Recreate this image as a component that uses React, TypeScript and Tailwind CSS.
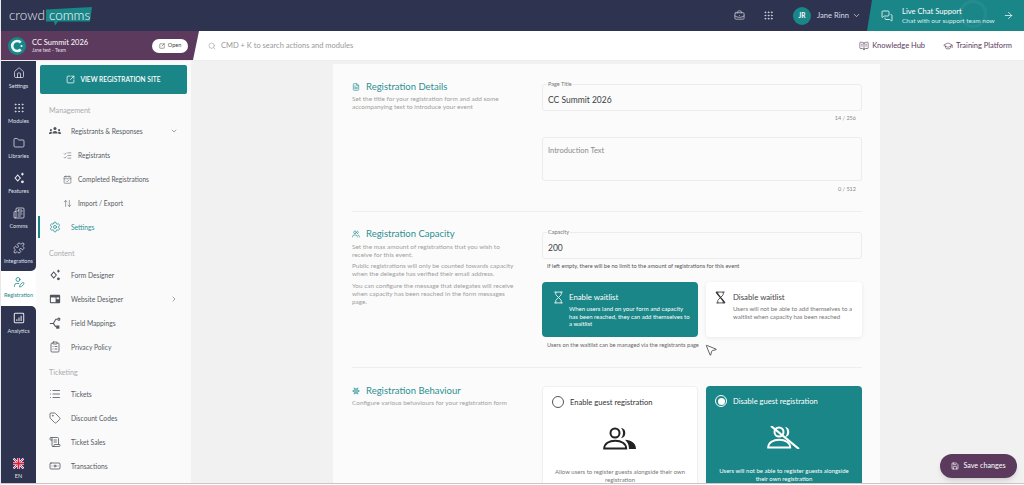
import type { ComponentType, ReactNode } from "react";
import {
  ArrowRight,
  ArrowUpDown,
  Banknote,
  BookOpenText,
  BriefcaseBusiness,
  CalendarCheck,
  ChevronDown,
  ChevronRight,
  ClipboardList,
  FileText,
  Folder,
  GraduationCap,
  Grip,
  Hourglass,
  House,
  List,
  ListChecks,
  MessagesSquare,
  MousePointer2,
  Newspaper,
  Puzzle,
  Save,
  ScrollText,
  Search,
  Settings,
  Snowflake,
  SquareArrowOutUpRight,
  Tag,
  UserPen,
  Users,
} from "lucide-react";

type IconType = ComponentType<{ size?: number; strokeWidth?: number; className?: string }>;

function SparkIcon({ size = 12, className }: { size?: number; strokeWidth?: number; className?: string }) {
  return (
    <svg width={size} height={size} viewBox="0 0 14 14" fill="none" stroke="currentColor" strokeWidth="1.3" className={className}>
      <path d="M5.5 3.5l3 3.5-3 3.5-3-3.5z" />
      <path d="M11 1v3M9.500 2.500h3" />
      <circle cx="11" cy="11.500" r="1" fill="currentColor" />
    </svg>
  );
}

function TeamIcon({ size = 12, className }: { size?: number; strokeWidth?: number; className?: string }) {
  return (
    <svg width={size} height={size} viewBox="0 0 14 14" fill="currentColor" className={className}>
      <circle cx="7" cy="4" r="1.800" />
      <path d="M4 10c0-2 1.200-3 3-3s3 1 3 3z" />
      <circle cx="2.200" cy="6" r="1.200" />
      <path d="M0 10.500c0-1.500.8-2.500 2.200-2.500.6 0 1 .1 1.300.4-.4.5-.6 1.200-.6 2.100z" />
      <circle cx="11.800" cy="6" r="1.200" />
      <path d="M14 10.500c0-1.500-.8-2.500-2.200-2.500-.6 0-1 .1-1.300.4.400.5.600 1.200.600 2.100z" />
    </svg>
  );
}

function WindowIcon({ size = 12, className }: { size?: number; strokeWidth?: number; className?: string }) {
  return (
    <svg width={size} height={size} viewBox="0 0 14 14" className={className}>
      <rect x="1" y="2" width="12" height="10" rx="1.200" fill="currentColor" />
      <rect x="2.200" y="5.200" width="5.500" height="5.500" fill="#fafafa" />
      <rect x="8.800" y="5.200" width="3" height="2" fill="#fafafa" />
    </svg>
  );
}

function MappingIcon({ size = 12, className }: { size?: number; strokeWidth?: number; className?: string }) {
  return (
    <svg width={size} height={size} viewBox="0 0 14 14" fill="none" stroke="currentColor" strokeWidth="1.200" className={className}>
      <path d="M1 7.500h4l3-5h2M5 7.500l3 4" />
      <circle cx="11.500" cy="2.500" r="1.200" />
      <rect x="9" y="10.500" width="2.500" height="2.500" fill="currentColor" />
    </svg>
  );
}

function ChartBoxIcon({ size = 12, className }: { size?: number; strokeWidth?: number; className?: string }) {
  return (
    <svg width={size} height={size} viewBox="0 0 14 14" fill="none" stroke="currentColor" strokeWidth="1.200" className={className}>
      <rect x="1.500" y="1.500" width="11" height="11" rx="1" />
      <path d="M4.500 10.500v-2M7 10.500v-4M9.500 10.500v-6" />
    </svg>
  );
}

const railTop: { label: string; icon: IconType }[] = [
  { label: "Settings", icon: House },
  { label: "Modules", icon: Grip },
  { label: "Libraries", icon: Folder },
  { label: "Features", icon: SparkIcon },
  { label: "Comms", icon: Newspaper },
  { label: "Integrations", icon: Puzzle },
];

function RailItem({ label, icon: Icon }: { label: string; icon: IconType }) {
  return (
    <div className="h-[35px] flex flex-col items-center pt-[6px] text-white">
      <Icon size={12} strokeWidth={1.5} className="text-[#e6e7ee]" />
      <span className="text-[5.5px] leading-[8px] mt-[3px] text-[#dfe1ea]">{label}</span>
    </div>
  );
}

function NavRow({ label, icon: Icon, right }: { label: string; icon: IconType; right?: ReactNode }) {
  return (
    <div className="h-[24px] flex items-center pl-[13px] pr-[13px] text-[#555a63]">
      <Icon size={12} strokeWidth={1.6} className="text-[#50545c] shrink-0" />
      <span className="ml-[10px] text-[6.7px] flex-1">{label}</span>
      {right}
    </div>
  );
}

function SubRow({ label, icon: Icon }: { label: string; icon: IconType }) {
  return (
    <div className="h-[24px] flex items-center pl-[27px] pt-[1px] text-[#555a63]">
      <Icon size={9} strokeWidth={1.6} className="text-[#60646c] shrink-0" />
      <span className="ml-[6px] text-[6.6px]">{label}</span>
    </div>
  );
}

function Group({ children }: { children: ReactNode }) {
  return <div className="h-[12px] flex items-center pl-[13px] text-[7.200px] text-[#a9abb0]">{children}</div>;
}

function SectionTitle({ icon: Icon, children }: { icon: IconType; children: ReactNode }) {
  return (
    <div className="flex items-center gap-[6px] text-[#2b9092] text-[9.500px] leading-[12px]">
      <Icon size={8} strokeWidth={2} />
      <span>{children}</span>
    </div>
  );
}

function Field({ label, value }: { label: string; value: string }) {
  return (
    <div className="relative h-[27px] border border-[#ececec] rounded-[3px] flex items-center px-[5px] pt-[5px] text-[8.500px] text-[#3c3f45]">
      <span className="absolute -top-[4px] left-[4px] bg-[#fbfbfb] px-[1px] text-[5.500px] leading-[7px] text-[#777]">{label}</span>
      {value}
    </div>
  );
}

function GuestIcon({ off }: { off?: boolean }) {
  return (
    <svg width="34" height="23" viewBox="0 0 34 23" fill="none" stroke="currentColor">
      <circle cx="12" cy="6" r="4.500" strokeWidth="2" />
      <path d="M18 .8a5.300 5.300 0 0 1 0 10.400a7.500 7.500 0 0 0 0-10.400z" fill="currentColor" stroke="none" />
      <path d="M1.200 21.500c0-5 5-7.800 11-7.800s11 2.800 11 7.800z" strokeWidth="2" />
      {off ? (
        <path d="M4 0l28 23" strokeWidth="2.200" />
      ) : (
        <path d="M22 12.800c6 .4 11 3.300 11 9.200h-7c0-3.800-1.300-6.700-4-9.200z" fill="currentColor" stroke="none" />
      )}
    </svg>
  );
}

function FlagUk() {
  return (
    <svg width="11" height="11" viewBox="0 0 22 22">
      <rect width="22" height="22" fill="#27357a" />
      <path d="M0 0l22 22M22 0L0 22" stroke="#fff" strokeWidth="4" />
      <path d="M0 0l22 22M22 0L0 22" stroke="#d8213b" strokeWidth="1.600" />
      <path d="M11 0v22M0 11h22" stroke="#fff" strokeWidth="6" />
      <path d="M11 0v22M0 11h22" stroke="#d8213b" strokeWidth="3.600" />
    </svg>
  );
}

function EventLogo() {
  return (
    <svg width="18" height="18" viewBox="0 0 18 18" fill="none" className="shrink-0">
      <circle cx="9" cy="9" r="9" fill="#1a8688" />
      <path d="M12.800 5.500a5 5 0 1 0 0 7" stroke="#e9f7f7" strokeWidth="2.600" />
      <circle cx="13.500" cy="9" r="1.100" fill="#e9f7f7" />
    </svg>
  );
}

export default function App() {
  return (
    <div className="relative w-[1024px] h-[485px] overflow-hidden flex flex-col bg-white font-['Lato','Noto_Sans',sans-serif] border-l border-[#e8e8ea]">
      {/* top bar */}
      <header className="h-[31px] shrink-0 bg-[#2e3350] flex items-center text-white">
        <div className="ml-[8px] flex items-center text-[13.500px] font-light leading-none">
          <span className="text-[#e8e9ef]">crowd</span>
          <span className="relative ml-[1px] w-[46px] h-[14px] pl-[3px] flex items-center">
            <svg className="absolute left-0 -top-[2px]" width="46" height="21" viewBox="0 0 46 21">
              <path d="M0 2.500L46 0l-2 14.500H12l-3 4-1-4H0z" fill="#1a8688" />
            </svg>
            <span className="relative text-white">comms</span>
          </span>
        </div>
        <div className="ml-auto flex items-center h-full">
          <BriefcaseBusiness size={11} strokeWidth={1.5} className="text-[#d8dae4]" />
          <Grip size={11} strokeWidth={1.8} className="ml-[18px] text-[#d8dae4]" />
          <div className="ml-[19px] w-[18px] h-[18px] rounded-full bg-[#1a8688] flex items-center justify-center text-[6.500px] font-bold">JR</div>
          <span className="ml-[6px] text-[7.600px] text-[#d8dae4]">Jane Rinn</span>
          <ChevronDown size={9} className="ml-[3px] text-[#d8dae4]" />
          <div className="relative ml-[6px] w-[157px] h-full overflow-hidden bg-[#1a8688] [clip-path:polygon(5px_0,100%_0,100%_100%,0_100%)] flex items-center pl-[14px]">
            <span className="absolute left-[92px] top-0 w-[28px] h-[28px] rounded-full border-[3px] border-white/5" />
            <MessagesSquare size={12} strokeWidth={1.6} className="relative" />
            <div className="relative ml-[9px] flex flex-col">
              <span className="text-[7.600px] leading-[10px]">Live Chat Support</span>
              <span className="text-[6.500px] leading-[9px] text-[#d8eeee]">Chat with our support team now</span>
            </div>
            <ArrowRight size={11} strokeWidth={1.6} className="relative ml-[8px]" />
          </div>
        </div>
      </header>

      {/* event bar */}
      <div className="h-[30px] shrink-0 flex items-center bg-white border-b border-[#eeeeee]">
        <div className="w-[198px] h-full bg-[#5b3a5e] [clip-path:polygon(0_0,100%_0,192px_100%,0_100%)] flex items-center pl-[7px] text-white">
          <EventLogo />
          <div className="ml-[6px] flex flex-col">
            <span className="text-[7.500px] leading-[9px]">CC Summit 2026</span>
            <span className="text-[4.800px] leading-[7px] text-[#e7dfe8]">Jane test - Team</span>
          </div>
          <div className="ml-auto mr-[11px] w-[36px] h-[14px] rounded-full bg-white text-[#444] flex items-center justify-center gap-[3px] text-[5.500px]">
            <SquareArrowOutUpRight size={6} />
            Open
          </div>
        </div>
        <Search size={8} className="ml-[9px] text-[#a8a8a8]" />
        <span className="ml-[5px] text-[7.500px] text-[#999]">CMD + K to search actions and modules</span>
        <div className="ml-auto flex items-center pr-[12px] text-[7.500px] text-[#5b3a5e]">
          <BookOpenText size={10} strokeWidth={1.5} />
          <span className="ml-[3px]">Knowledge Hub</span>
          <GraduationCap size={10} strokeWidth={1.5} className="ml-[18px]" />
          <span className="ml-[3px]">Training Platform</span>
        </div>
      </div>

      {/* body */}
      <div className="flex-1 min-h-0 flex overflow-hidden bg-[#f1f1f1]">
        {/* icon rail */}
        <nav className="w-[35px] shrink-0 flex flex-col bg-white">
          <div className="h-[210px] bg-[#2e3350] rounded-br-[5px] overflow-hidden">
            {railTop.map((r) => (
              <RailItem key={r.label} label={r.label} icon={r.icon} />
            ))}
          </div>
          <div className="h-[35px] flex flex-col items-center pt-[5px] text-[#1a8688]">
            <UserPen size={12} strokeWidth={1.6} />
            <span className="text-[5.500px] leading-[8px] mt-[3px]">Registration</span>
          </div>
          <div className="flex-1 bg-[#2e3350] rounded-tr-[5px] flex flex-col">
            <RailItem label="Analytics" icon={ChartBoxIcon} />
            <div className="mt-auto mb-[3px] flex flex-col items-center text-[#dfe1ea]">
              <FlagUk />
              <span className="text-[5.500px] leading-[8px] mt-[3px]">EN</span>
            </div>
          </div>
        </nav>

        {/* sidebar */}
        <aside className="w-[155px] shrink-0 bg-[#fafafa] flex flex-col">
          <div className="mx-[4px] mt-[4px] h-[29px] shrink-0 rounded-[2px] bg-[#1a8688] text-white flex items-center justify-center gap-[5px] text-[6.600px] font-semibold">
            <SquareArrowOutUpRight size={9} />
            VIEW REGISTRATION SITE
          </div>
          <div className="mt-[11px]">
            <Group>Management</Group>
          </div>
          <div className="mt-[2px]">
            <NavRow label="Registrants & Responses" icon={TeamIcon} right={<ChevronDown size={8} className="text-[#777]" />} />
            <SubRow label="Registrants" icon={ListChecks} />
            <SubRow label="Completed Registrations" icon={CalendarCheck} />
            <SubRow label="Import / Export" icon={ArrowUpDown} />
            <div className="relative h-[24px] flex items-center pl-[13px] text-[#2b9092]">
              <span className="absolute left-[2px] top-[1px] h-[22px] w-[2px] bg-[#1a8688]" />
              <Settings size={12} strokeWidth={1.6} />
              <span className="ml-[10px] text-[6.700px]">Settings</span>
            </div>
          </div>
          <div className="mt-[9px]">
            <Group>Content</Group>
          </div>
          <div className="mt-[3px]">
            <NavRow label="Form Designer" icon={SparkIcon} />
            <NavRow label="Website Designer" icon={WindowIcon} right={<ChevronRight size={8} className="text-[#777]" />} />
            <NavRow label="Field Mappings" icon={MappingIcon} />
            <NavRow label="Privacy Policy" icon={ClipboardList} />
          </div>
          <div className="mt-[8px]">
            <Group>Ticketing</Group>
          </div>
          <div className="mt-[3px]">
            <NavRow label="Tickets" icon={List} />
            <NavRow label="Discount Codes" icon={Tag} />
            <NavRow label="Ticket Sales" icon={ScrollText} />
            <NavRow label="Transactions" icon={Banknote} />
          </div>
        </aside>

        {/* main */}
        <main className="flex-1 min-w-0 pl-[142px] pt-[3px]">
          <div className="w-[547px] bg-[#fbfbfb] pl-[19px] pr-[18px] pt-[20px] text-[#a0a0a0]">
            {/* details */}
            <section className="flex justify-between border-b border-[#eeeeee] h-[128px]">
              <div className="w-[165px] -mt-[3px] text-[6.450px] leading-[8px]">
                <SectionTitle icon={FileText}>Registration Details</SectionTitle>
                <p className="mt-[2px]">Set the title for your registration form and add some accompanying text to introduce your event</p>
              </div>
              <div className="w-[320px]">
                <Field label="Page Title" value="CC Summit 2026" />
                <div className="h-[14px] pr-[6px] flex items-center justify-end text-[5.500px] text-[#888]">14 / 256</div>
                <div className="mt-[12px] h-[44px] border border-[#ececec] rounded-[3px] px-[5px] pt-[8px] text-[7.500px] leading-[10px] text-[#8b8b8b]">Introduction Text</div>
                <div className="h-[16px] pr-[6px] flex items-center justify-end text-[5.500px] text-[#888]">0 / 512</div>
              </div>
            </section>

            {/* capacity */}
            <section className="flex justify-between border-b border-[#eeeeee] h-[156px] pt-[20px]">
              <div className="w-[165px] -mt-[4px] text-[6.450px] leading-[8px]">
                <SectionTitle icon={Users}>Registration Capacity</SectionTitle>
                <p className="mt-[3px]">Set the max amount of registrations that you wish to receive for this event.</p>
                <p className="mt-[3px]">Public registrations will only be counted towards capacity when the delegate has verified their email address.</p>
                <p className="mt-[4px]">You can configure the message that delegates will receive when capacity has been reached in the form messages page.</p>
              </div>
              <div className="w-[320px]">
                <Field label="Capacity" value="200" />
                <div className="h-[14px] pl-[5px] flex items-center text-[5.650px] text-[#555]">If left empty, there will be no limit to the amount of registrations for this event</div>
                <div className="mt-[9px] flex gap-[8px]">
                  <div className="w-[156px] h-[55px] rounded-[4px] bg-[#1a8688] text-white flex pl-[10px] pt-[9px]">
                    <Hourglass size={13} strokeWidth={1.500} />
                    <div className="ml-[4px] w-[124px] pt-[1px]">
                      <div className="text-[7.800px] leading-[10px]">Enable waitlist</div>
                      <div className="mt-[3px] text-[6px] leading-[7.500px]">When users land on your form and capacity has been reached, they can add themselves to a waitlist</div>
                    </div>
                  </div>
                  <div className="w-[156px] h-[55px] rounded-[4px] bg-white shadow-[0_1px_4px_rgba(0,0,0,0.08)] flex pl-[8px] pt-[9px]">
                    <div className="relative w-[13px] h-[13px] text-[#333]">
                      <Hourglass size={13} strokeWidth={1.500} />
                      <svg className="absolute inset-0" width="13" height="13" viewBox="0 0 13 13">
                        <path d="M2 1l9 11" stroke="currentColor" strokeWidth="1.200" />
                      </svg>
                    </div>
                    <div className="ml-[6px] w-[122px] pt-[1px]">
                      <div className="text-[7.800px] leading-[10px] text-[#444]">Disable waitlist</div>
                      <div className="mt-[3px] text-[6.100px] leading-[7.500px] text-[#777]">Users will not be able to add themselves to a waitlist when capacity has been reached</div>
                    </div>
                  </div>
                </div>
                <div className="relative h-[16px] pl-[5px] flex items-center text-[5.700px] text-[#666]">
                  Users on the waitlist can be managed via the registrants page
                  <MousePointer2 size={14} strokeWidth={1.200} className="absolute left-[162px] top-[6px] text-[#222] fill-white" />
                </div>
              </div>
            </section>

            {/* behaviour */}
            <section className="flex justify-between pt-[18px]">
              <div className="w-[165px] -mt-[1px] text-[6.450px] leading-[8px]">
                <SectionTitle icon={Snowflake}>Registration Behaviour</SectionTitle>
                <p className="mt-[2px]">Configure various behaviours for your registration form</p>
              </div>
              <div className="w-[320px] flex gap-[8px]">
                <div className="w-[156px] h-[110px] shrink-0 rounded-[4px] bg-white border border-[#f0f0f0] flex flex-col items-center px-[9px] pt-[9px] text-[#333]">
                  <div className="self-stretch flex items-center">
                    <span className="w-[12px] h-[12px] rounded-full border border-[#555]" />
                    <span className="ml-[6px] text-[7.600px] leading-[12px]">Enable guest registration</span>
                  </div>
                  <div className="mt-[19px] h-[23px] text-[#222]">
                    <GuestIcon />
                  </div>
                  <p className="mt-[18px] text-center text-[6px] leading-[7.500px] text-[#777]">Allow users to register guests alongside their own registration</p>
                </div>
                <div className="w-[156px] h-[110px] shrink-0 rounded-[4px] bg-[#1a8688] text-white flex flex-col items-center px-[9px] pt-[9px]">
                  <div className="self-stretch flex items-center">
                    <span className="w-[12px] h-[12px] rounded-full border border-white flex items-center justify-center">
                      <span className="w-[7px] h-[7px] rounded-full bg-white" />
                    </span>
                    <span className="ml-[6px] text-[7.600px] leading-[12px]">Disable guest registration</span>
                  </div>
                  <div className="mt-[19px] h-[23px]">
                    <GuestIcon off />
                  </div>
                  <p className="mt-[18px] text-center text-[6px] leading-[7.500px]">Users will not be able to register guests alongside their own registration</p>
                </div>
              </div>
            </section>
          </div>
        </main>
      </div>
      <div className="h-[2px] shrink-0 bg-white border-t border-[#c8c8c8]" />

      {/* floating save */}
      <div className="absolute left-[939px] top-[454px] w-[77px] h-[24px] rounded-full bg-[#5b3a5e] shadow-md text-white flex items-center justify-center gap-[4px] text-[7.200px]">
        <Save size={8} />
        Save changes
      </div>
    </div>
  );
}
